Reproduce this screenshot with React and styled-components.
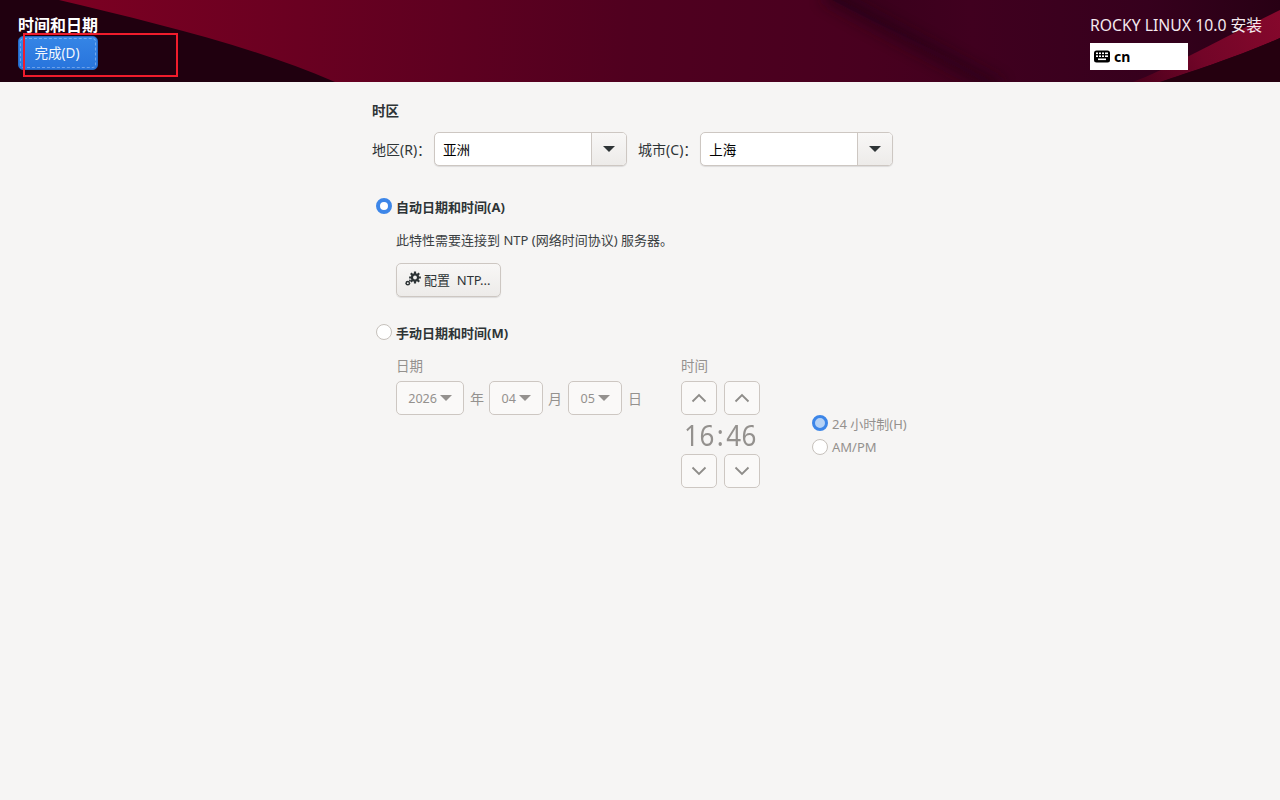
import React from "react";
import styled, { createGlobalStyle } from "styled-components";

const Global = createGlobalStyle`
  html, body { margin: 0; padding: 0; height: 100%; }
  body { background: #f6f5f4; font-family: "Noto Sans", "Noto Sans CJK SC", sans-serif; color: #2e3436; font-size: 13px; }
  * { box-sizing: border-box; }
`;

const Page = styled.div`
  width: 1280px; height: 800px; overflow: hidden; background: #f6f5f4;
  display: flex; flex-direction: column;
`;
const Header = styled.header`
  position: relative; height: 82px; flex: none; display: flex; justify-content: space-between;
  padding: 14px 18px 0 18px; background: #20000f; color: #fff;
`;
const HeaderArt = styled.svg`
  position: absolute; inset: 0; width: 100%; height: 100%;
`;
const HeaderLeft = styled.div`
  position: relative; display: flex; flex-direction: column; align-items: flex-start;
`;
const Title = styled.div`
  font-size: 16px; font-weight: 700; line-height: 22px; color: #fff;
`;
const DoneButton = styled.button`
  position: relative; width: 80px; height: 34px; padding: 0 2px 2px 0; font: inherit; font-size: 13.5px;
  color: #f4f8fd; border: 1px solid #2468c4; border-radius: 5px;
  background: linear-gradient(#3585e6, #2874dc);
  &::after {
    content: ""; position: absolute; inset: 1px; border: 1px dashed rgba(255,255,255,.32); border-radius: 4px;
  }
`;
const Highlight = styled.div`
  position: absolute; left: 23px; top: 33px; width: 155px; height: 44px; border: 2px solid #f01c2c;
`;
const HeaderRight = styled.div`
  position: relative; display: flex; flex-direction: column; align-items: flex-start;
`;
const Product = styled.div`
  font-size: 15.75px; line-height: 23px; color: #f4e9ee; white-space: nowrap;
`;
const Keyboard = styled.div`
  margin-top: 6px; width: 98px; height: 27px; background: #fff; color: #000; font-weight: 700; font-size: 14px;
  display: flex; align-items: center; gap: 4px; padding-left: 4px;
`;
const Main = styled.main`
  padding: 18px 0 0 372px; display: flex; flex-direction: column; align-items: flex-start;
`;
const SectionTitle = styled.div`
  font-weight: 700; font-size: 13.5px; line-height: 22px; color: #2e3436;
`;
const ZoneRow = styled.div`
  margin-top: 10px; height: 34px; display: flex; align-items: center;
`;
const ZoneLabel = styled.span`
  font-size: 14px; color: #2e3436; margin-right: ${p => p.$gap}px; white-space: nowrap;
`;
const Combo = styled.div`
  display: flex; height: 34px; width: ${p => p.$w}px; margin-right: ${p => p.$mr || 0}px; border: 1px solid #cdc7c2; border-radius: 5px;
  overflow: hidden; box-shadow: 0 1px 1px rgba(0,0,0,.1); background: #fff;
`;
const ComboText = styled.div`
  flex: 1; padding-left: 8px; font-size: 13.5px; line-height: 34px; color: #000;
`;
const ComboArrow = styled.div`
  width: 35px; border-left: 1px solid #cdc7c2; background: linear-gradient(#f8f7f6, #edebe9);
  display: flex; align-items: center; justify-content: center;
`;
const Arrow = styled.i`
  display: block; width: 0; height: 0; border-left: 6px solid transparent; border-right: 6px solid transparent;
  border-top: 6px solid ${p => p.$c || "#2e3436"};
`;
const RadioRow = styled.div`
  display: flex; align-items: center; gap: 4px; margin-top: ${p => p.$mt}px; margin-left: 4px; height: 22px;
`;
const Radio = styled.span`
  display: block; flex: none; width: 16px; height: 16px; border-radius: 50%;
  ${p => p.$on
    ? `background: ${p.$dim ? "#b6d2f5" : "#fff"}; border: ${p.$dim ? "3.5px" : "4px"} solid #3d86e8;`
    : `background: #fff; border: 1px solid #c6c1bc;`}
`;
const RadioLabel = styled.span`
  font-weight: 700; font-size: 13px; color: #2e3436; white-space: nowrap;
`;
const Indented = styled.div`
  margin-left: 24px; display: flex; flex-direction: column; align-items: flex-start;
`;
const Note = styled.div`
  margin-top: 12px; font-size: 13px; line-height: 22px; color: #3a4042; white-space: nowrap;
`;
const NtpButton = styled.button`
  margin-top: 12px; width: 105px; height: 34px; font: inherit; font-size: 13px; color: #2e3436; padding: 0 0 2px 8px;
  border: 1px solid #cdc7c2; border-radius: 5px; background: linear-gradient(#f8f7f6, #edebe9);
  box-shadow: 0 1px 1px rgba(0,0,0,.1);
  display: flex; align-items: center; gap: 2px; white-space: nowrap;
`;
const ManualArea = styled.div`
  margin-top: 13px; margin-left: 24px; display: flex; align-items: flex-start;
`;
const DimLabel = styled.div`
  font-size: 13.5px; line-height: 20px; color: #94918e;
`;
const DateCol = styled.div`
  width: 285px; display: flex; flex-direction: column;
`;
const DateRow = styled.div`
  margin-top: 5px; display: flex; align-items: center; height: 34px;
`;
const DateBox = styled.div`
  width: ${p => p.$w}px; height: 34px; border: 1px solid #cdc7c2; border-radius: 5px; background: #faf9f8;
  color: #94918e; font-size: 12.6px; display: flex; align-items: center; justify-content: flex-end; gap: 3px; padding: 0 11px 0 0;
`;
const DateUnit = styled.span`
  font-size: 14px; color: #94918e; margin: 0 ${p => p.$mr}px 0 ${p => p.$ml}px;
`;
const TimeCol = styled.div`
  width: 131px; display: flex; flex-direction: column;
`;
const SpinRow = styled.div`
  margin-top: ${p => p.$mt || 0}px; display: flex; gap: 7px;
`;
const SpinBtn = styled.div`
  width: 36px; height: 34px; border: 1px solid #cdc7c2; border-radius: 5px; background: #faf9f8;
  display: flex; align-items: center; justify-content: center;
`;
const Clock = styled.div`
  width: 79px; height: 39px; display: flex; justify-content: center; align-items: center;
  font-size: 26px; line-height: 39px; padding-top: 1px; color: #94918e; letter-spacing: .5px;
  transform: scaleY(1.12);
`;
const ClockColon = styled.span`
  margin: 0 2px;
`;
const FormatCol = styled.div`
  margin-top: 56px; display: flex; flex-direction: column; gap: 2px;
`;
const FormatRow = styled.div`
  display: flex; align-items: center; gap: 4px; height: 22px; font-size: 13px; color: #94918e; white-space: nowrap;
`;

const Chevron = ({ up }) => (
  <svg width="16" height="10" viewBox="0 0 16 10">
    <path d={up ? "M1.5 8.5 8 2l6.5 6.5" : "M1.5 1.5 8 8l6.5-6.5"} fill="none" stroke="#8e8c89" strokeWidth="1.8" />
  </svg>
);

const Gears = () => (
  <svg width="17" height="16" viewBox="0 0 17 16" style={{ flex: "none" }}>
    <g fill="#2e3436">
      <circle cx="10" cy="6.5" r="4.2" />
      <g stroke="#2e3436" strokeWidth="2.2">
        <path d="M10 .6v11.8M4.1 6.5h11.8M5.8 2.3l8.4 8.4M14.2 2.3l-8.4 8.4" />
      </g>
      <circle cx="2.8" cy="12.2" r="2.4" />
      <circle cx="4.9" cy="9.4" r=".9" />
    </g>
    <circle cx="10" cy="6.5" r="1.9" fill="#f3f2f1" />
    <circle cx="2.8" cy="12.2" r=".9" fill="#f3f2f1" />
  </svg>
);

const KeyIcon = () => (
  <svg width="16" height="13" viewBox="0 0 16 13">
    <rect x="0" y="0.5" width="16" height="12" rx="2.5" fill="#000" />
    <g fill="#fff">
      <rect x="2" y="2.5" width="2" height="1.6" /><rect x="5" y="2.5" width="2" height="1.6" /><rect x="8" y="2.5" width="2" height="1.6" /><rect x="11" y="2.5" width="3" height="1.6" />
      <rect x="2" y="5.4" width="2" height="1.6" /><rect x="5" y="5.4" width="2" height="1.6" /><rect x="8" y="5.4" width="2" height="1.6" /><rect x="11" y="5.4" width="3" height="1.6" />
      <rect x="4" y="8.5" width="8" height="1.6" />
    </g>
  </svg>
);

const App = () => (
  <Page>
    <Global />
    <Header>
      <HeaderArt viewBox="0 0 1280 82" preserveAspectRatio="none">
        <defs>
          <linearGradient id="wine" x1="60" y1="0" x2="1010" y2="40" gradientUnits="userSpaceOnUse">
            <stop offset="0" stopColor="#7c0022" />
            <stop offset=".25" stopColor="#6a0021" />
            <stop offset=".6" stopColor="#50001f" />
            <stop offset=".85" stopColor="#48001f" />
            <stop offset="1" stopColor="#40001e" />
          </linearGradient>
          <linearGradient id="wine2" x1="840" y1="40" x2="1280" y2="10" gradientUnits="userSpaceOnUse">
            <stop offset="0" stopColor="#38001b" />
            <stop offset=".3" stopColor="#40001f" />
            <stop offset=".7" stopColor="#36001d" />
            <stop offset="1" stopColor="#280014" />
          </linearGradient>
          <linearGradient id="stripe" x1="1133" y1="82" x2="1280" y2="10" gradientUnits="userSpaceOnUse">
            <stop offset="0" stopColor="#4a001c" />
            <stop offset=".45" stopColor="#730528" />
            <stop offset="1" stopColor="#86082c" />
          </linearGradient>
          <filter id="soft" x="-20%" y="-50%" width="140%" height="200%">
            <feGaussianBlur stdDeviation="7" />
          </filter>
        </defs>
        <path d="M59 0C150 22 250 45 335 82H1040L835 0Z" fill="url(#wine)" />
        <path d="M832 0C890 30 950 60 1007 82H1280V0Z" fill="url(#wine2)" />
        <path d="M825 -6C885 28 945 58 1000 88" fill="none" stroke="#220012" strokeWidth="16" opacity=".55" filter="url(#soft)" />
        <path d="M1133 82C1160 72 1190 55 1280 10V38C1240 56 1190 72 1160 82Z" fill="url(#stripe)" />
        <path d="M1160 82C1190 72 1240 56 1280 38V82Z" fill="#25000f" />
      </HeaderArt>
      <HeaderLeft>
        <Title>时间和日期</Title>
        <DoneButton>完成(D)</DoneButton>
      </HeaderLeft>
      <HeaderRight>
        <Product>ROCKY LINUX 10.0 安装</Product>
        <Keyboard><KeyIcon />cn</Keyboard>
      </HeaderRight>
      <Highlight />
    </Header>
    <Main>
      <SectionTitle>时区</SectionTitle>
      <ZoneRow>
        <ZoneLabel $gap={3}>地区(R)：</ZoneLabel>
        <Combo $w={193} $mr={11}>
          <ComboText>亚洲</ComboText>
          <ComboArrow><Arrow /></ComboArrow>
        </Combo>
        <ZoneLabel $gap={3}>城市(C)：</ZoneLabel>
        <Combo $w={193}>
          <ComboText>上海</ComboText>
          <ComboArrow><Arrow /></ComboArrow>
        </Combo>
      </ZoneRow>
      <RadioRow $mt={29}>
        <Radio $on />
        <RadioLabel>自动日期和时间(A)</RadioLabel>
      </RadioRow>
      <Indented>
        <Note>此特性需要连接到 NTP (网络时间协议) 服务器。</Note>
        <NtpButton><Gears />配置&nbsp; NTP...</NtpButton>
      </Indented>
      <RadioRow $mt={24}>
        <Radio />
        <RadioLabel>手动日期和时间(M)</RadioLabel>
      </RadioRow>
      <ManualArea>
        <DateCol>
          <DimLabel>日期</DimLabel>
          <DateRow>
            <DateBox $w={68}>2026<Arrow $c="#94918e" /></DateBox>
            <DateUnit $ml={6} $mr={5}>年</DateUnit>
            <DateBox $w={54}>04<Arrow $c="#94918e" /></DateBox>
            <DateUnit $ml={5} $mr={6}>月</DateUnit>
            <DateBox $w={54}>05<Arrow $c="#94918e" /></DateBox>
            <DateUnit $ml={6} $mr={0}>日</DateUnit>
          </DateRow>
        </DateCol>
        <TimeCol>
          <DimLabel>时间</DimLabel>
          <SpinRow $mt={5}>
            <SpinBtn><Chevron up /></SpinBtn>
            <SpinBtn><Chevron up /></SpinBtn>
          </SpinRow>
          <Clock>16<ClockColon>:</ClockColon>46</Clock>
          <SpinRow>
            <SpinBtn><Chevron /></SpinBtn>
            <SpinBtn><Chevron /></SpinBtn>
          </SpinRow>
        </TimeCol>
        <FormatCol>
          <FormatRow><Radio $on $dim />24 小时制(H)</FormatRow>
          <FormatRow><Radio />AM/PM</FormatRow>
        </FormatCol>
      </ManualArea>
    </Main>
  </Page>
);

export default App;
